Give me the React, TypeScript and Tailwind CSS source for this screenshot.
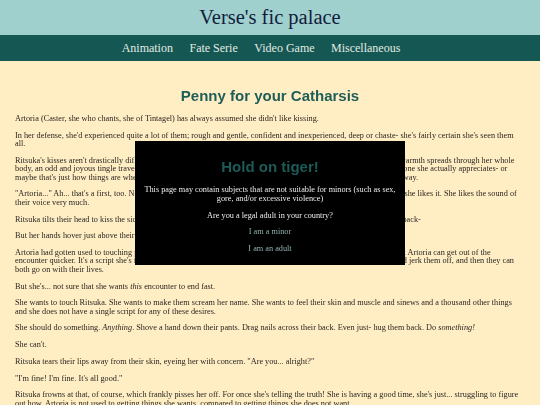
export default function App() {
  return (
    <div className="min-h-screen bg-[#ffeec4] font-['Liberation_Serif','Times_New_Roman',serif] text-[#231f1c]">
      <header className="flex h-[35px] items-center justify-center bg-[#9fd0ce]">
        <h1 className="text-[20.5px] leading-none text-[#121c3c]">Verse's fic palace</h1>
      </header>
      <nav className="flex h-[26px] items-center justify-center gap-[16.5px] bg-[#155752] pr-[18px] text-[12px] leading-none text-[#e2ebe5]">
        <a>Animation</a>
        <a>Fate Serie</a>
        <a>Video Game</a>
        <a>Miscellaneous</a>
      </nav>

      <main className="px-[15px] pt-[26px] will-change-transform">
        <h2 className="mb-[11px] text-center font-['Liberation_Sans',Arial,sans-serif] text-[15px] font-bold leading-[17px] text-[#1f5d57]">
          Penny for your Catharsis
        </h2>
        <div className="flex flex-col gap-[8.38px] whitespace-nowrap text-[8.25px] leading-[8.38px]">
          <p>Artoria (Caster, she who chants, she of Tintagel) has always assumed she didn't like kissing.</p>
          <p>
            In her defense, she'd experienced quite a lot of them; rough and gentle, confident and inexperienced, deep or chaste- she's fairly certain she's seen them
            <br />
            all.
          </p>
          <p>
            Ritsuka's kisses aren't drastically different from the others she's had, and yet something about them feels new. A soft warmth spreads through her whole
            <br />
            body, an odd and joyous tingle travels up her spine, and for once, this kiss is not one she merely tolerates, but instead one she actually appreciates- or
            <br />
            maybe that's just how things are when the person kissing you actually cares about doing it gently and in just the right way.
          </p>
          <p>
            "Artoria..." Ah... that's a first, too. Nobody has ever said her name in the middle of this kiss quite like that before, and she likes it. She likes the sound of
            <br />
            their voice very much.
          </p>
          <p>Ritsuka tilts their head to kiss the side of her neck, and she sighs as she finds herself leaning into their touch, arching back-</p>
          <p>But her hands hover just above their shoulders, unsure of where they are supposed to go.</p>
          <p>
            Artoria had gotten used to touching people in ways that make the other person feel good as quickly as possible, so that Artoria can get out of the
            <br />
            encounter quicker. It's a script she's followed many times: let them kiss her, let them touch her a bit, then reach out and jerk them off, and then they can
            <br />
            both go on with their lives.
          </p>
          <p>
            But she's... not sure that she wants <i>this</i> encounter to end fast.
          </p>
          <p>
            She wants to touch Ritsuka. She wants to make them scream her name. She wants to feel their skin and muscle and sinews and a thousand other things
            <br />
            and she does not have a single script for any of these desires.
          </p>
          <p>
            She should do something. <i>Anything</i>. Shove a hand down their pants. Drag nails across their back. Even just- hug them back. Do <i>something!</i>
          </p>
          <p>She can't.</p>
          <p>Ritsuka tears their lips away from their skin, eyeing her with concern. "Are you... alright?"</p>
          <p>"I'm fine! I'm fine. It's all good."</p>
          <p>
            Ritsuka frowns at that, of course, which frankly pisses her off. For once she's telling the truth! She is having a good time, she's just... struggling to figure
            <br />
            out how. Artoria is not used to getting things she wants, compared to getting things she does not want.
          </p>
        </div>
      </main>

      {/* age confirmation dialog */}
      <div className="fixed inset-0 flex items-center justify-center">
        <div className="h-[124px] w-[270px] bg-black">
          <div className="flex flex-col items-center px-[6px] pt-[16.5px] text-center text-[8.25px] leading-[9px] text-[#ecebe8] will-change-transform">
            <h3 className="font-['Liberation_Sans',Arial,sans-serif] text-[15px] font-bold leading-[17px] text-[#1d5b58]">Hold on tiger!</h3>
            <p className="mt-[10px]">
              This page may contain subjects that are not suitable for minors (such as sex, gore, and/or excessive violence)
            </p>
            <p className="mt-[8px]">Are you a legal adult in your country?</p>
            <a className="mt-[7px] text-[#8fb2ae]">I am a minor</a>
            <a className="mt-[8px] text-[#8fb2ae]">I am an adult</a>
          </div>
        </div>
      </div>
    </div>
  );
}
